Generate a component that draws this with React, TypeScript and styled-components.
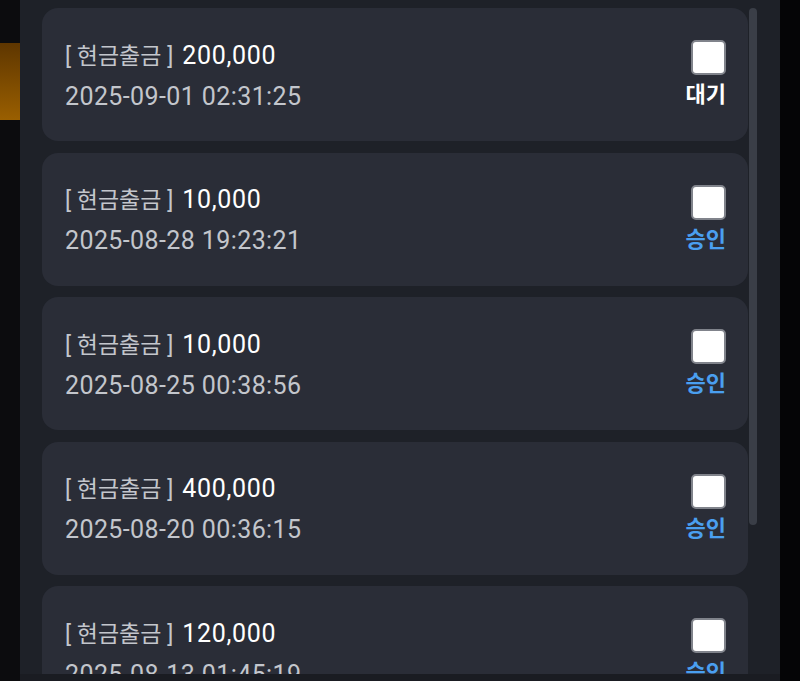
import styled, { createGlobalStyle } from "styled-components";

const GlobalStyle = createGlobalStyle`
  html, body {
    margin: 0;
    padding: 0;
    background: #060607;
    font-family: Roboto, "Noto Sans CJK KR", sans-serif;
  }
  * {
    box-sizing: border-box;
  }
`;

type Status = "wait" | "done";

interface Withdrawal {
  id: number;
  amount: number;
  date: string;
  status: Status;
}

const withdrawals: Withdrawal[] = [
  { id: 1, amount: 200000, date: "2025-09-01 02:31:25", status: "wait" },
  { id: 2, amount: 10000, date: "2025-08-28 19:23:21", status: "done" },
  { id: 3, amount: 10000, date: "2025-08-25 00:38:56", status: "done" },
  { id: 4, amount: 400000, date: "2025-08-20 00:36:15", status: "done" },
  { id: 5, amount: 120000, date: "2025-08-13 01:45:19", status: "done" },
];

const Page = styled.div`
  display: flex;
  width: 800px;
  height: 681px;
  overflow: hidden;
`;

const Backdrop = styled.div`
  width: 20px;
  flex-shrink: 0;
  background: #0c0c0e;
  padding-top: 43px;
`;

const AccentBar = styled.div`
  height: 77px;
  background: linear-gradient(to bottom, #5e3600, #9a5f00);
`;

const Modal = styled.div`
  width: 760px;
  height: 681px;
  flex-shrink: 0;
  background: #1e2128;
  display: flex;
  flex-direction: column;
`;

const Body = styled.div`
  height: 674px;
  display: flex;
  padding-left: 22px;
`;

const List = styled.div`
  width: 706px;
  height: 100%;
  overflow: hidden;
  padding-top: 8px;
  display: flex;
  flex-direction: column;
  gap: 11.5px;
`;

const Rail = styled.div`
  width: 8px;
  margin-left: 1px;
  padding-top: 8px;
`;

const Thumb = styled.div`
  height: 517px;
  border-radius: 4px;
  background: #3a3e47;
`;

const Card = styled.div`
  flex-shrink: 0;
  height: 133px;
  border-radius: 16px;
  background: #2a2d37;
  padding: 0 22px 0 23px;
  display: flex;
  align-items: center;
  justify-content: space-between;
`;

const Info = styled.div`
  display: flex;
  flex-direction: column;
  gap: 10px;
  padding-top: 3px;
`;

const Title = styled.div`
  line-height: 30px;
  color: #ffffff;
  display: flex;
  align-items: baseline;
  gap: 9px;
`;

const Kind = styled.span`
  font-size: 23px;
  color: #c3c6cc;
`;

const Amount = styled.span`
  font-size: 25px;
  letter-spacing: 0.7px;
`;

const DateText = styled.div`
  font-size: 25px;
  letter-spacing: 0.4px;
  line-height: 30px;
  color: #c3c6cc;
`;

const Side = styled.div`
  display: flex;
  flex-direction: column;
  align-items: flex-end;
  gap: 8px;
  padding-bottom: 2px;
`;

const Check = styled.div`
  width: 35px;
  height: 35px;
  border-radius: 5px;
  background: #ffffff;
  border: 2px solid #80838b;
`;

const StatusLabel = styled.div<{ $status: Status }>`
  font-size: 22px;
  font-weight: 700;
  line-height: 24px;
  color: ${(p) => (p.$status === "wait" ? "#ffffff" : "#4a9ff0")};
`;

const Footer = styled.div`
  flex: 1;
  background: #1a1c22;
`;

const Edge = styled.div`
  flex: 1;
  background: #050506;
`;

const App = () => {
  return (
    <>
      <GlobalStyle />
      <Page>
        <Backdrop>
          <AccentBar />
        </Backdrop>
        <Modal>
          <Body>
            <List>
              {withdrawals.map((w) => (
                <Card key={w.id}>
                  <Info>
                    <Title>
                      <Kind>[ 현금출금 ]</Kind>
                      <Amount>{w.amount.toLocaleString("en-US")}</Amount>
                    </Title>
                    <DateText>{w.date}</DateText>
                  </Info>
                  <Side>
                    <Check />
                    <StatusLabel $status={w.status}>
                      {w.status === "wait" ? "대기" : "승인"}
                    </StatusLabel>
                  </Side>
                </Card>
              ))}
            </List>
            <Rail>
              <Thumb />
            </Rail>
          </Body>
          <Footer />
        </Modal>
        <Edge />
      </Page>
    </>
  );
};

export default App;
